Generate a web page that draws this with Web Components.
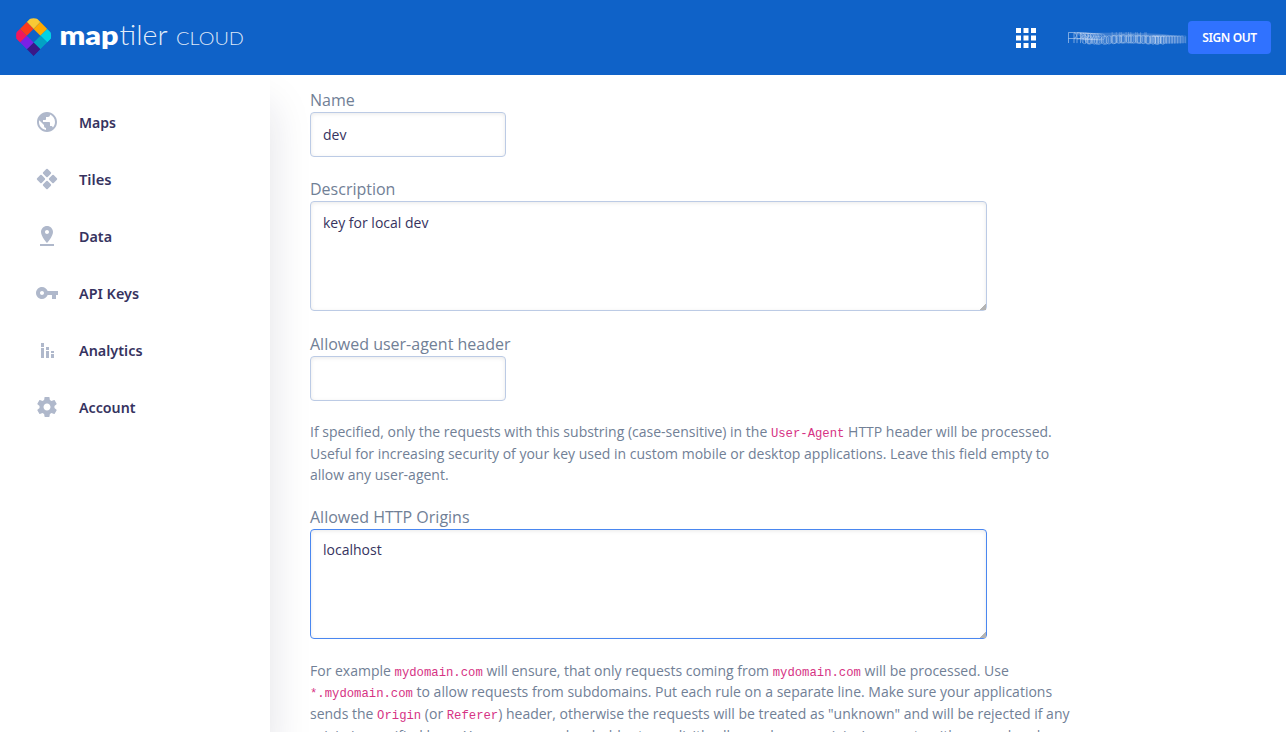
<!DOCTYPE html>
<html lang="en">
<head>
<meta charset="utf-8">
<title>MapTiler Cloud</title>
<style>
html,body{margin:0;height:100%;overflow:hidden;background:#fff}
body{font-family:"Open Sans",sans-serif}
</style>
</head>
<body>
<cloud-app></cloud-app>
<script>
const define = (name, html, setup) => customElements.define(name, class extends HTMLElement {
  constructor() {
    super();
    this.attachShadow({mode: 'open'});
  }
  connectedCallback() {
    const t = document.createElement('template');
    t.innerHTML = html;
    this.shadowRoot.replaceChildren(t.content.cloneNode(true));
    if (setup) setup(this, this.shadowRoot);
  }
});

define('brand-logo', `
<style>:host{display:block;width:244px;height:75px}svg{display:block}</style>
<svg width="250" height="75" viewBox="0 0 250 75">
  <defs><clipPath id="pin"><path d="M-17.2 3.2A17.5 17.5 0 1 1 17.2 3.2L0 20.5Z"/></clipPath></defs>
  <g transform="translate(33.6 35.7)"><g clip-path="url(#pin)"><g transform="rotate(45) scale(9.65)">
    <rect x="-1.5" y="-1.5" width="1" height="1" fill="#f9c935"/>
    <rect x="-.5" y="-1.5" width="1" height="1" fill="#ffaa01"/>
    <rect x=".5" y="-1.5" width="1" height="1" fill="#03d2e3"/>
    <rect x=".5" y="-.5" width="1" height="1" fill="#03a1c4"/>
    <rect x=".5" y=".5" width="1" height="1" fill="#3a1888"/>
    <rect x="-.5" y=".5" width="1" height="1" fill="#7b21e6"/>
    <rect x="-1.5" y=".5" width="1" height="1" fill="#f1175d"/>
    <rect x="-1.5" y="-.5" width="1" height="1" fill="#fb3a1b"/>
  </g></g></g>
  <g fill="#fff" font-family="Lato,sans-serif">
    <text x="59.5" y="44.6" font-size="27" font-weight="800" textLength="59" lengthAdjust="spacingAndGlyphs">map</text>
    <text x="119.5" y="44.6" font-size="27" font-weight="300" textLength="48" fill-opacity=".9" lengthAdjust="spacingAndGlyphs">tiler</text>
    <text x="176" y="44.8" font-size="18.5" font-weight="300" textLength="68" fill-opacity=".88" lengthAdjust="spacingAndGlyphs">CLOUD</text>
  </g>
</svg>`);

define('masked-name', `
<style>:host{display:block;width:120px;height:20px}svg{display:block;overflow:visible;filter:blur(.35px)}</style>
<svg width="120" height="20" viewBox="0 0 120 20"><path fill="#c3d3f0" fill-opacity=".24" d="M8 5L60 4.5 95 6 118 9V15L95 16 50 15.5 20 16Z"/><g stroke="#d5e2f6" fill="none"></g></svg>`, (host, root) => {
  let out = '';
  for (let i = 0; i < 10; i++) {
    const x = [0.5, 6, 9, 12.5, 15, 17.5, 20, 23, 26, 29][i];
    out += `<path stroke-opacity="${.55 - i * .03}" d="M${x} ${15 + i * .05}V${4.5 + i * .15}h5a3 3 0 0 1 0 6h-5"/>`;
  }
  for (let i = 0; i < 26; i++) {
    const x = 14 + i * 3.1 + Math.sin(i * 2.3), y = 11.5 + Math.sin(i / 3) * .8;
    out += `<path stroke-opacity=".32" d="M${x} ${y}a2.7 3.3 0 1 0 5.2 0a2.7 3.3 0 1 0 -5.2 0"/>`;
    if (i > 9 && i < 22) out += `<path stroke-opacity=".28" d="M${x} 4v11m-2-7h4"/>`;
  }
  for (let i = 0; i < 12; i++) {
    const x = 82 + i * 2.8;
    out += `<path stroke-opacity="${.5 - i * .025}" d="M${x} 15.5V8h5v7.5"/>`;
  }
  root.querySelector('g').innerHTML = out;
});

define('cloud-header', `
<style>
:host{display:flex;align-items:center;height:75px;background:#0f62c8;box-sizing:border-box;padding-right:15px}
.grid{display:block;margin-left:auto;margin-right:32px}
button{position:relative;font:600 12px/33px "Noto Sans","Open Sans",sans-serif;color:#fff;background:#3072ff;border:0;border-radius:4px;width:83px;height:33px;padding:0;display:flex;justify-content:center;letter-spacing:-.4px;white-space:nowrap}
masked-name{width:120px}
</style>
<brand-logo></brand-logo>
<svg class="grid" width="20" height="20" viewBox="0 0 20 20" fill="#fff"><path d="M0 0h5v5H0zM7.5 0h5v5h-5zM15 0h5v5h-5zM0 7.5h5v5H0zM7.5 7.5h5v5h-5zM15 7.5h5v5h-5zM0 15h5v5H0zM7.5 15h5v5h-5zM15 15h5v5h-5z"/></svg>
<masked-name></masked-name>
<button>SIGN OUT</button>`);

const ICONS = {
  maps: '<path d="M12 2C6.48 2 2 6.48 2 12s4.48 10 10 10 10-4.48 10-10S17.52 2 12 2zm-1 17.93c-3.95-.49-7-3.85-7-7.93 0-.62.08-1.21.21-1.79L9 15v1c0 1.1.9 2 2 2v1.93zm6.9-2.54c-.26-.81-1-1.39-1.9-1.39h-1v-3c0-.55-.45-1-1-1H8v-2h2c.55 0 1-.45 1-1V7h2c1.1 0 2-.9 2-2v-.41c2.93 1.19 5 4.06 5 7.41 0 2.08-.8 3.97-2.1 5.39z"/>',
  tiles: '<g transform="translate(12 12) rotate(45)"><rect x="-7.5" y="-7.5" width="6.5" height="6.5" rx="1"/><rect x="1" y="-7.5" width="6.5" height="6.5" rx="1"/><rect x="-7.5" y="1" width="6.5" height="6.5" rx="1"/><rect x="1" y="1" width="6.5" height="6.5" rx="1"/></g>',
  data: '<path d="M18 8c0-3.31-2.69-6-6-6S6 4.69 6 8c0 4.5 6 11 6 11s6-6.5 6-11zm-8 0c0-1.1.9-2 2-2s2 .9 2 2-.89 2-2 2c-1.1 0-2-.9-2-2zM5 20v2h14v-2H5z"/>',
  keys: '<path d="M12.65 10C11.83 7.67 9.61 6 7 6c-3.31 0-6 2.69-6 6s2.69 6 6 6c2.61 0 4.83-1.67 5.65-4H17v4h4v-4h2v-4H12.65zM7 14c-1.1 0-2-.9-2-2s.9-2 2-2 2 .9 2 2-.9 2-2 2z"/>',
  analytics: '<path d="M6 5h3v4H6zM6 10h3v10H6zM11 9h3v3h-3zM11 13h3v7h-3zM16 13h3v2h-3zM16 16h3v4h-3z"/>',
  account: '<path d="M19.43 12.98c.04-.32.07-.64.07-.98s-.03-.66-.07-.98l2.11-1.65c.19-.15.24-.42.12-.64l-2-3.46c-.12-.22-.39-.3-.61-.22l-2.49 1c-.52-.4-1.08-.73-1.69-.98l-.38-2.65C14.46 2.18 14.25 2 14 2h-4c-.25 0-.46.18-.49.42l-.38 2.65c-.61.25-1.17.59-1.69.98l-2.49-1c-.23-.09-.49 0-.61.22l-2 3.46c-.13.22-.07.49.12.64l2.11 1.65c-.04.32-.07.65-.07.98s.03.66.07.98l-2.11 1.65c-.19.15-.24.42-.12.64l2 3.46c.12.22.39.3.61.22l2.49-1c.52.4 1.08.73 1.69.98l.38 2.65c.03.24.24.42.49.42h4c.25 0 .46-.18.49-.42l.38-2.65c.61-.25 1.17-.59 1.69-.98l2.49 1c.23.09.49 0 .61-.22l2-3.46c.12-.22.07-.49-.12-.64l-2.11-1.65zM12 15.5c-1.93 0-3.5-1.57-3.5-3.5s1.57-3.5 3.5-3.5 3.5 1.57 3.5 3.5-1.57 3.5-3.5 3.5z"/>'
};

define('nav-item', `
<style>
:host{display:flex;align-items:center;height:57px;padding-left:35px;gap:20px;font:600 15px/24px "Noto Sans","Open Sans",sans-serif;color:#363360}
.icon{display:block;fill:#afb8cb}
.label{display:block;overflow:visible;fill:currentColor}
</style>
<svg class="icon" width="24" height="24" viewBox="0 0 24 24"></svg>
<svg class="label" height="24"><text x="0" y="17.8" lengthAdjust="spacingAndGlyphs"></text></svg>`, (host, root) => {
  root.querySelector('.icon').innerHTML = ICONS[host.getAttribute('icon')];
  const text = root.querySelector('text');
  const width = host.getAttribute('label-width');
  text.textContent = host.getAttribute('label');
  text.setAttribute('textLength', width);
  root.querySelector('.label').setAttribute('width', width);
});

define('side-nav', `
<style>
:host{display:block;width:270px;flex:none;box-sizing:border-box;padding-top:18px;background:#fff;box-shadow:0 30px 40px rgba(20,20,60,.13)}
</style>
<nav>
<nav-item icon="maps" label="Maps" label-width="37"></nav-item>
<nav-item icon="tiles" label="Tiles" label-width="32.5"></nav-item>
<nav-item icon="data" label="Data" label-width="33"></nav-item>
<nav-item icon="keys" label="API Keys" label-width="60"></nav-item>
<nav-item icon="analytics" label="Analytics" label-width="63.5"></nav-item>
<nav-item icon="account" label="Account" label-width="56.5"></nav-item>
</nav>`);

define('form-field', `
<style>
:host{display:block;margin-bottom:20px}
label{display:block;font:16px/24px "Open Sans",sans-serif;color:#718096}
input,textarea{display:block;box-sizing:border-box;margin:0;font:14px/21px "Open Sans",sans-serif;color:#363360;background:#fff;border:1px solid #bccbe5;border-radius:4px;padding:11px 12px;box-shadow:inset 0 1px 4px rgba(0,0,0,.09);outline:0}
input{width:196px;height:45px}
textarea{width:677px;height:110px;padding-top:10px}
textarea::-webkit-resizer{background:linear-gradient(135deg,transparent 79%,#b4b4b4 80%)}
:host([active]) textarea{border-color:#4a87f0;padding-top:9px}
</style>
<label></label>`, (host, root) => {
  root.querySelector('label').textContent = host.getAttribute('label');
  const control = document.createElement(host.hasAttribute('multiline') ? 'textarea' : 'input');
  control.value = host.getAttribute('value') || '';
  control.spellcheck = false;
  root.append(control);
});

define('help-text', `
<style>
:host{display:block;margin-bottom:19.2px;font:14px/21.6px "Open Sans",sans-serif;color:#718096;white-space:nowrap}
::slotted(code){font:12.25px/1 "Liberation Mono",monospace;color:#d63384}
</style><slot></slot>`);

define('key-form', `
<style>
:host{display:block;flex:1;padding:13px 0 0 40px;min-width:0}
.desc{margin-bottom:21px}
.origins{margin-bottom:20.8px}
</style>
<form-field label="Name" value="dev"></form-field>
<form-field class="desc" label="Description" value="key for local dev" multiline></form-field>
<form-field label="Allowed user-agent header"></form-field>
<help-text>If specified, only the requests with this substring (case-sensitive) in the <code>User-Agent</code> HTTP header will be processed.<br>Useful for increasing security of your key used in custom mobile or desktop applications. Leave this field empty to<br>allow any user-agent.</help-text>
<form-field class="origins" label="Allowed HTTP Origins" value="localhost" multiline active></form-field>
<help-text>For example <code>mydomain.com</code> will ensure, that only requests coming from <code>mydomain.com</code> will be processed. Use<br><code>*.mydomain.com</code> to allow requests from subdomains. Put each rule on a separate line. Make sure your applications<br>sends the <code>Origin</code> (or <code>Referer</code>) header, otherwise the requests will be treated as "unknown" and will be rejected if any<br>origin is specified here. You can use a placeholder to explicitly allow unknown origins' requests with secure header.</help-text>`);

define('cloud-app', `
<style>
:host{display:flex;flex-direction:column;height:100vh;overflow:hidden}
cloud-header{flex:none;z-index:1}
.body{display:flex;flex:1;min-height:0;overflow:hidden}
</style>
<cloud-header></cloud-header>
<div class="body"><side-nav></side-nav><key-form></key-form></div>`);
</script>
</body>
</html>
